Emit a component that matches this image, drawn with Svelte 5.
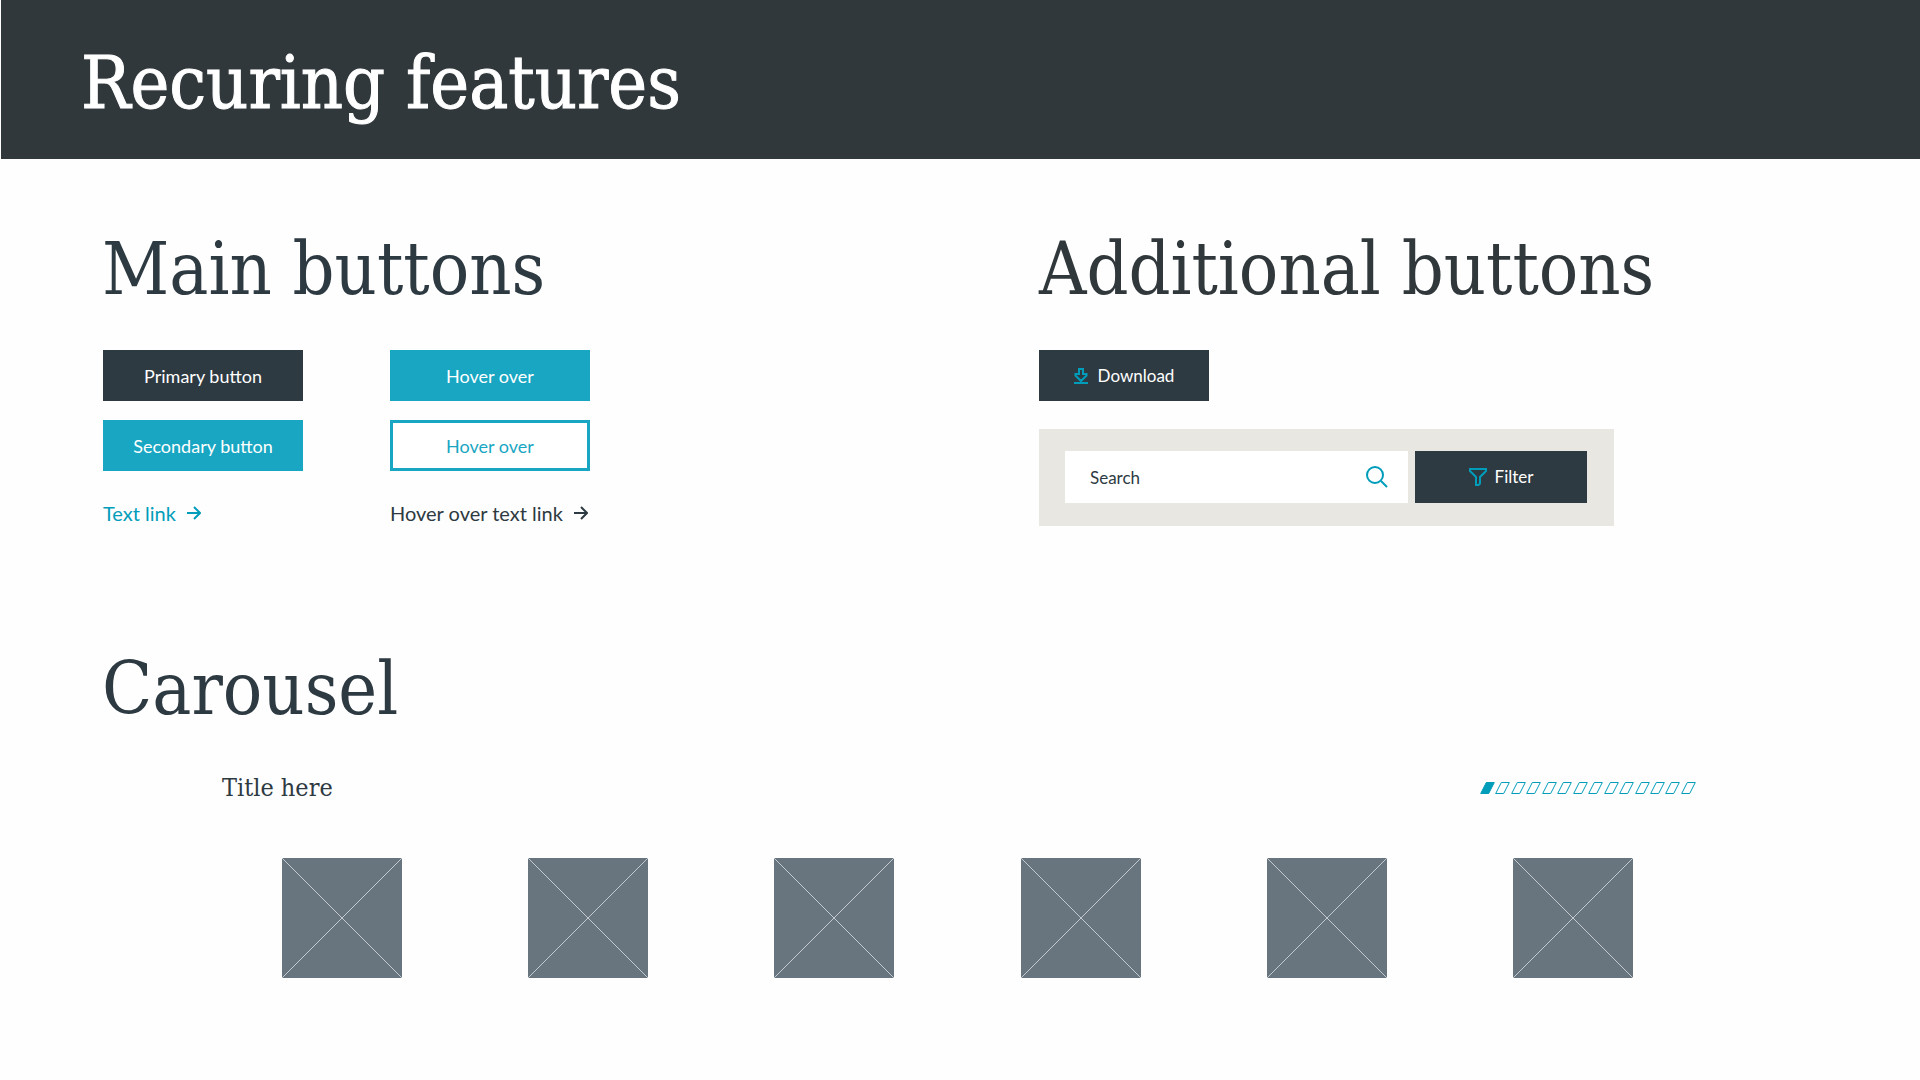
<!-- SCRIPTS /////////////////////////////////////////////////////// -->
<script>
  // CONTENT ---------------------------------------------------------
  const slides = [1, 2, 3, 4, 5, 6];
  const pages = Array.from({ length: 14 }, (_, i) => i);

  // LOCAL STATE -----------------------------------------------------
  let activePage = 0;
  let searchText = "";
</script>

<!-- MARKUP //////////////////////////////////////////////////////// -->
<header>
  <h1>Recuring features</h1>
</header>

<main>
  <div class="button-sections">
    <section>
      <h2>Main buttons</h2>
      <div class="button-grid">
        <button type="button" class="button dark">Primary button</button>
        <button type="button" class="button teal">Hover over</button>
        <button type="button" class="button teal">Secondary button</button>
        <button type="button" class="button outline">Hover over</button>
      </div>
      <div class="link-grid">
        <a href="#text-link">
          Text link
          <svg width="14" height="14" viewBox="0 0 14 14"><path d="M0 7H12.5M7 1L13 7L7 13" /></svg>
        </a>
        <a href="#hover-link" class="hovered">
          Hover over text link
          <svg width="14" height="14" viewBox="0 0 14 14"><path d="M0 7H12.5M7 1L13 7L7 13" /></svg>
        </a>
      </div>
    </section>

    <section class="additional">
      <h2>Additional buttons</h2>
      <button type="button" class="button dark download">
        <svg width="14" height="16" viewBox="0 0 14 16">
          <path d="M5 1H9V6H12.5V7.5L7 13L1.5 7.5V6H5ZM0 15H14" />
        </svg>
        Download
      </button>
      <form class="search-panel" on:submit|preventDefault>
        <div class="search-box">
          <input type="text" aria-label="Search" placeholder="Search" bind:value={searchText} />
          <button type="submit" class="search-button" aria-label="Submit search">
            <svg width="22" height="22" viewBox="0 0 22 22">
              <circle cx="9" cy="9" r="8" />
              <path d="M15 15L21 21" />
            </svg>
          </button>
        </div>
        <button type="button" class="button dark filter">
          <svg width="18" height="18" viewBox="0 0 18 18">
            <path d="M1 1H17V3L11 9V15.5L9.5 17H7V9L1 3Z" />
          </svg>
          Filter
        </button>
      </form>
    </section>
  </div>

  <section class="carousel">
    <h2>Carousel</h2>
    <div class="carousel-head">
      <h3>Title here</h3>
      <div class="pager">
        {#each pages as page}
          <button type="button"
            aria-label={`Page ${page + 1}`}
            class:active={page === activePage}
            on:click={() => activePage = page}
          >
            <svg width="15" height="12" viewBox="0 0 15 12"><path d="M6.3 .5H14.3L8.7 11.5H.7Z" /></svg>
          </button>
        {/each}
      </div>
    </div>
    <div class="slides">
      {#each slides as slide}
        <svg class="slide" role="img" aria-label={`Slide ${slide}`} viewBox="0 0 120 120">
          <path d="M0 0L120 120M120 0L0 120" />
        </svg>
      {/each}
    </div>
  </section>
</main>

<!-- STYLES //////////////////////////////////////////////////////// -->
<style>
  :global(body) {
    background-color: #fefefe;
    color: #2e3a42;
    font-family: Lato, sans-serif;
  }
  h1, h2, h3 {
    margin: 0;
    font-family: "DejaVu Serif Condensed", "DejaVu Serif", serif;
    font-weight: normal;
  }
  h1, h2 {
    font-size: 73px;
    line-height: 96px;
  }
  h3 {
    font-size: 25px;
    line-height: 32px;
  }
  button {
    border: none;
    padding: 0;
    font-family: inherit;
    cursor: pointer;
  }
  svg {
    display: block;
    flex: none;
    fill: none;
    stroke: currentColor;
  }

  header {
    margin-left: 1px;
    padding: 35px 80px 28px;
    background-color: #31383b;
    color: #fff;
  }
  h1 {
    -webkit-text-stroke: 1px #fff;
  }
  main {
    padding: 62px 102px;
  }
  .button-sections {
    display: grid;
    grid-template-columns: 6fr 5fr;
  }
  .button-sections h2 {
    margin-bottom: 33px;
  }

  /* buttons */
  .button {
    display: flex;
    justify-content: center;
    align-items: center;
    height: 51px;
    font-size: 18px;
    line-height: 22px;
    color: #fff;
  }
  .dark {
    background-color: #2e3a42;
  }
  .teal {
    background-color: #18a6c2;
  }
  .outline {
    border: 3px solid #18a6c2;
    background-color: #fff;
    color: #18a6c2;
  }
  .button svg {
    color: #009dbb;
    stroke-width: 2;
  }
  .button-grid, .link-grid {
    display: grid;
    grid-template-columns: 200px 200px;
    column-gap: 87px;
    padding-left: 1px;
  }
  .button-grid {
    row-gap: 19px;
  }
  .link-grid {
    margin-top: 30px;
  }
  a {
    display: flex;
    align-items: center;
    gap: 11px;
    font-size: 20px;
    line-height: 24px;
    white-space: nowrap;
    color: #009dbb;
    text-decoration: none;
  }
  a.hovered {
    color: #2e3a42;
  }
  a svg {
    stroke-width: 2;
  }

  /* download, search and filter */
  .additional {
    padding-left: 1px;
  }
  .additional h2 {
    color: #31383b;
  }
  .additional .button {
    font-size: 17px;
  }
  .download {
    gap: 10px;
    width: 170px;
  }
  .search-panel {
    display: flex;
    gap: 7px;
    box-sizing: border-box;
    max-width: 575px;
    margin-top: 28px;
    padding: 22px 27px 23px 26px;
    background-color: #e8e7e1;
  }
  .search-box {
    display: flex;
    flex: 1;
    background-color: #fff;
  }
  input {
    flex: 1;
    min-width: 0;
    border: none;
    padding: 0 0 0 25px;
    background: none;
    font-family: inherit;
    font-size: 17px;
    color: #2e3a42;
  }
  input::placeholder {
    color: #2e3a42;
    opacity: 1;
  }
  .search-button {
    padding: 0 20px;
    background: none;
    color: #009dbb;
  }
  .search-button svg {
    stroke-width: 2;
  }
  .filter {
    gap: 8px;
    width: 172px;
    height: 52px;
  }

  /* carousel */
  .carousel {
    margin-top: 115px;
  }
  .carousel-head {
    display: flex;
    justify-content: space-between;
    align-items: center;
    margin-top: 35px;
    padding: 0 122px 0 120px;
  }
  .pager {
    display: flex;
    justify-content: space-between;
    width: 216px;
    color: #009dbb;
  }
  .pager button {
    background: none;
    color: inherit;
  }
  .pager .active svg {
    fill: currentColor;
  }
  .slides {
    display: flex;
    justify-content: space-between;
    margin-top: 54px;
    padding: 0 185px 0 180px;
  }
  .slide {
    width: 120px;
    height: 120px;
    background-color: #68757f;
    stroke: #c3cbd0;
  }
</style>
